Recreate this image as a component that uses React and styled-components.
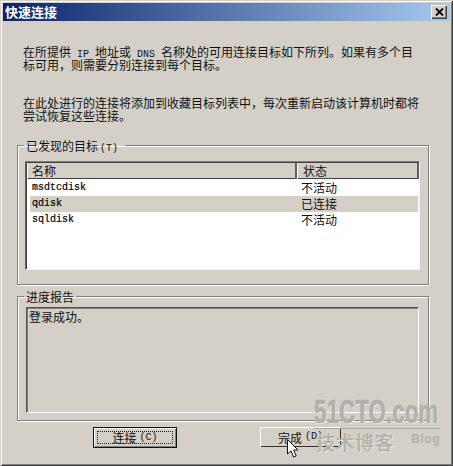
import React from "react";
import styled, { createGlobalStyle } from "styled-components";

const Global = createGlobalStyle`
  html, body { margin: 0; padding: 0; background: #d4d0c8; }
  body { font-family: "Noto Sans CJK SC", "Liberation Sans", sans-serif; font-size: 12px; color: #111; }
`;

const Dialog = styled.div`
  position: relative; box-sizing: border-box; width: 453px; height: 466px; padding: 3px;
  background: #d4d0c8; overflow: hidden;
  box-shadow: inset 1px 1px 0 #d4d0c8, inset -1px -1px 0 #404040, inset 2px 2px 0 #fff, inset -2px -2px 0 #808080;
  display: flex; flex-direction: column;
`;
const TitleBar = styled.div`
  height: 18px; flex: none; display: flex; align-items: center; justify-content: space-between;
  padding: 0 3px 0 2px; background: linear-gradient(90deg, #0a246a, #a6caf0);
`;
const TitleText = styled.div`color: #fff; font-weight: 700; font-size: 13px; line-height: 18px;`;
const CloseButton = styled.div`
  box-sizing: border-box; width: 16px; height: 14px; background: #d4d0c8; display: flex; align-items: center; justify-content: center;
  box-shadow: inset 1px 1px 0 #fff, inset -1px -1px 0 #404040, inset -2px -2px 0 #808080;
`;
const Body = styled.div`flex: 1; display: flex; flex-direction: column; padding: 24px 21px 0 14px;`;
const Intro = styled.div`display: flex; flex-direction: column; gap: 25px; padding: 0 6px; margin-bottom: 17px;`;
const Para = styled.p`margin: 0; font-size: 12px; line-height: 13px; white-space: pre;`;
const Latin = styled.span`font-family: "Liberation Mono", monospace; font-size: 10px; line-height: 0;`;
const LegendHotkey = styled(Latin)`margin-left: 2px;`;
const Group = styled.fieldset`
  margin: ${p => p.$mt}px 0 0; min-width: 0; box-sizing: border-box; height: ${p => p.$h}px; border: 1px solid #808080;
  padding: ${p => p.$pt}px 8px 0 0;
  box-shadow: 1px 1px 0 #fff, inset 1px 1px 0 #fff;
`;
const Legend = styled.legend`margin-left: 6px; padding: 0 ${p => p.$pr}px 0 2px; font-size: 12px; line-height: 13px;`;
const List = styled.div`
  box-sizing: border-box; height: 109px; margin-left: 7px; background: #fff; padding: 1px 0 0 1px;
  border: 1px solid; border-color: #808080 #f4f2ee #f4f2ee #606060;
  box-shadow: inset 1px 1px 0 #404040;
`;
const HeaderRow = styled.div`
  display: grid; grid-template-columns: 270px 1fr; height: 16px; background: #d4d0c8;
  border-bottom: 1px solid #404040; box-sizing: border-box;
`;
const HeaderCell = styled.div`
  padding-left: ${p => p.$pl}px; line-height: 16px; font-size: 12px;
  border-right: 2px solid #606060; box-shadow: inset 1px 0 0 #fff;
`;
const Row = styled.div`
  display: grid; grid-template-columns: 270px 1fr; height: 16px; margin: ${p => (p.$first ? "1px 0 0" : "0")};
  margin-left: 3px; margin-right: 1px; line-height: 16px; background: ${p => (p.$sel ? "#d4d0c8" : "transparent")};
`;
const NameCell = styled.div`font-family: "Liberation Mono", monospace; font-size: 10px; padding-left: 2px; color: #000; -webkit-text-stroke: 0.2px #000;`;
const StateCell = styled.div`font-size: 12px; padding-left: 1px;`;
const Report = styled.div`
  box-sizing: border-box; width: 393px; height: 106px; margin-left: 8px; padding: 2px 2px;
  border: 1px solid; border-color: #505050 #fff #fff #505050; line-height: 13px;
  box-shadow: inset 1px 1px 0 #808080;
`;
const Footer = styled.div`display: flex; align-items: flex-start; margin-top: 6px; padding-left: 76px; gap: 83px;`;
const Btn = styled.div`
  box-sizing: border-box; position: relative; width: ${p => p.$w}px; height: ${p => p.$h}px; display: flex; align-items: center;
  justify-content: center; gap: 3px; font-size: 12px; background: #d4d0c8;
  ${p => p.$def
    ? "border: 1px solid #111; box-shadow: inset 1px 1px 0 #fff, inset -1px -1px 0 #808080;"
    : "box-shadow: inset 1px 1px 0 #fff, inset -1px -1px 0 #303030;"}
`;
const Focus = styled.div`position: absolute; inset: 3px; border: 1px dotted #222;`;
const Mark = styled.div`
  position: absolute; left: 314px; top: 396px; width: 126px; height: 60px; pointer-events: none; color: #b2b0aa;
`;
const MarkLogo = styled.div`
  font-family: "Liberation Sans", sans-serif; font-weight: 700; font-size: 33px; line-height: 32px; white-space: nowrap;
  transform: scaleX(0.68); transform-origin: left top; -webkit-text-stroke: 0.6px #b2b0aa; text-shadow: 1px 1px 0 #eeeae2;
`;
const MarkRule = styled.div`height: 1px; background: #aaa8a2;`;
const MarkRow = styled.div`display: flex; justify-content: space-between; align-items: center; margin-top: 1px;`;
const MarkCn = styled.div`font-size: 19px; line-height: 24px; font-weight: 500; letter-spacing: .5px; padding-left: 2px; text-shadow: 1px 1px 0 #e6e3dc;`;
const MarkBlog = styled.div`font-family: "Liberation Sans", sans-serif; font-weight: 700; font-size: 12px; letter-spacing: .5px; padding-bottom: 6px;`;
const Cursor = styled.svg`position: absolute; left: 287px; top: 439px;`;

export default function App() {
  return (
    <Dialog>
      <Global />
      <TitleBar>
        <TitleText>快速连接</TitleText>
        <CloseButton>
          <svg width="9" height="8" viewBox="0 0 9 8"><path d="M1 0.5 L8 7.5 M8 0.5 L1 7.5" stroke="#000" strokeWidth="1.8" /></svg>
        </CloseButton>
      </TitleBar>
      <Body>
        <Intro>
          <Para>在所提供<Latin> IP </Latin>地址或<Latin> DNS </Latin>名称处的可用连接目标如下所列。如果有多个目{"\n"}标可用，则需要分别连接到每个目标。</Para>
          <Para>在此处进行的连接将添加到收藏目标列表中，每次重新启动该计算机时都将{"\n"}尝试恢复这些连接。</Para>
        </Intro>
        <Group $h={146} $pt={9} $mt={0}>
          <Legend $pr={7}>已发现的目标<LegendHotkey>(T)</LegendHotkey></Legend>
          <List>
            <HeaderRow>
              <HeaderCell $pl={5}>名称</HeaderCell>
              <HeaderCell $pl={6}>状态</HeaderCell>
            </HeaderRow>
            <Row $first><NameCell>msdtcdisk</NameCell><StateCell>不活动</StateCell></Row>
            <Row $sel><NameCell>qdisk</NameCell><StateCell>已连接</StateCell></Row>
            <Row><NameCell>sqldisk</NameCell><StateCell>不活动</StateCell></Row>
          </List>
        </Group>
        <Group $h={131} $pt={4} $mt={5}>
          <Legend $pr={2}>进度报告</Legend>
          <Report>登录成功。</Report>
        </Group>
        <Footer>
          <Btn $def $w={84} $h={21}><Focus />连接<Latin>(C)</Latin></Btn>
          <Btn $w={81} $h={20}>完成<Latin>(D)</Latin></Btn>
        </Footer>
      </Body>
      <Mark>
        <MarkLogo>51CTO.com</MarkLogo>
        <MarkRule />
        <MarkRow><MarkCn>技术博客</MarkCn><MarkBlog>Blog</MarkBlog></MarkRow>
      </Mark>
      <Cursor width="13" height="20" viewBox="0 0 13 20">
        <path d="M0.5 0.5 L0.5 15 L4 11.8 L6.6 18 L9.2 16.8 L6.6 11 L11 11 Z" fill="#fff" stroke="#111" strokeWidth="1" />
      </Cursor>
    </Dialog>
  );
}
